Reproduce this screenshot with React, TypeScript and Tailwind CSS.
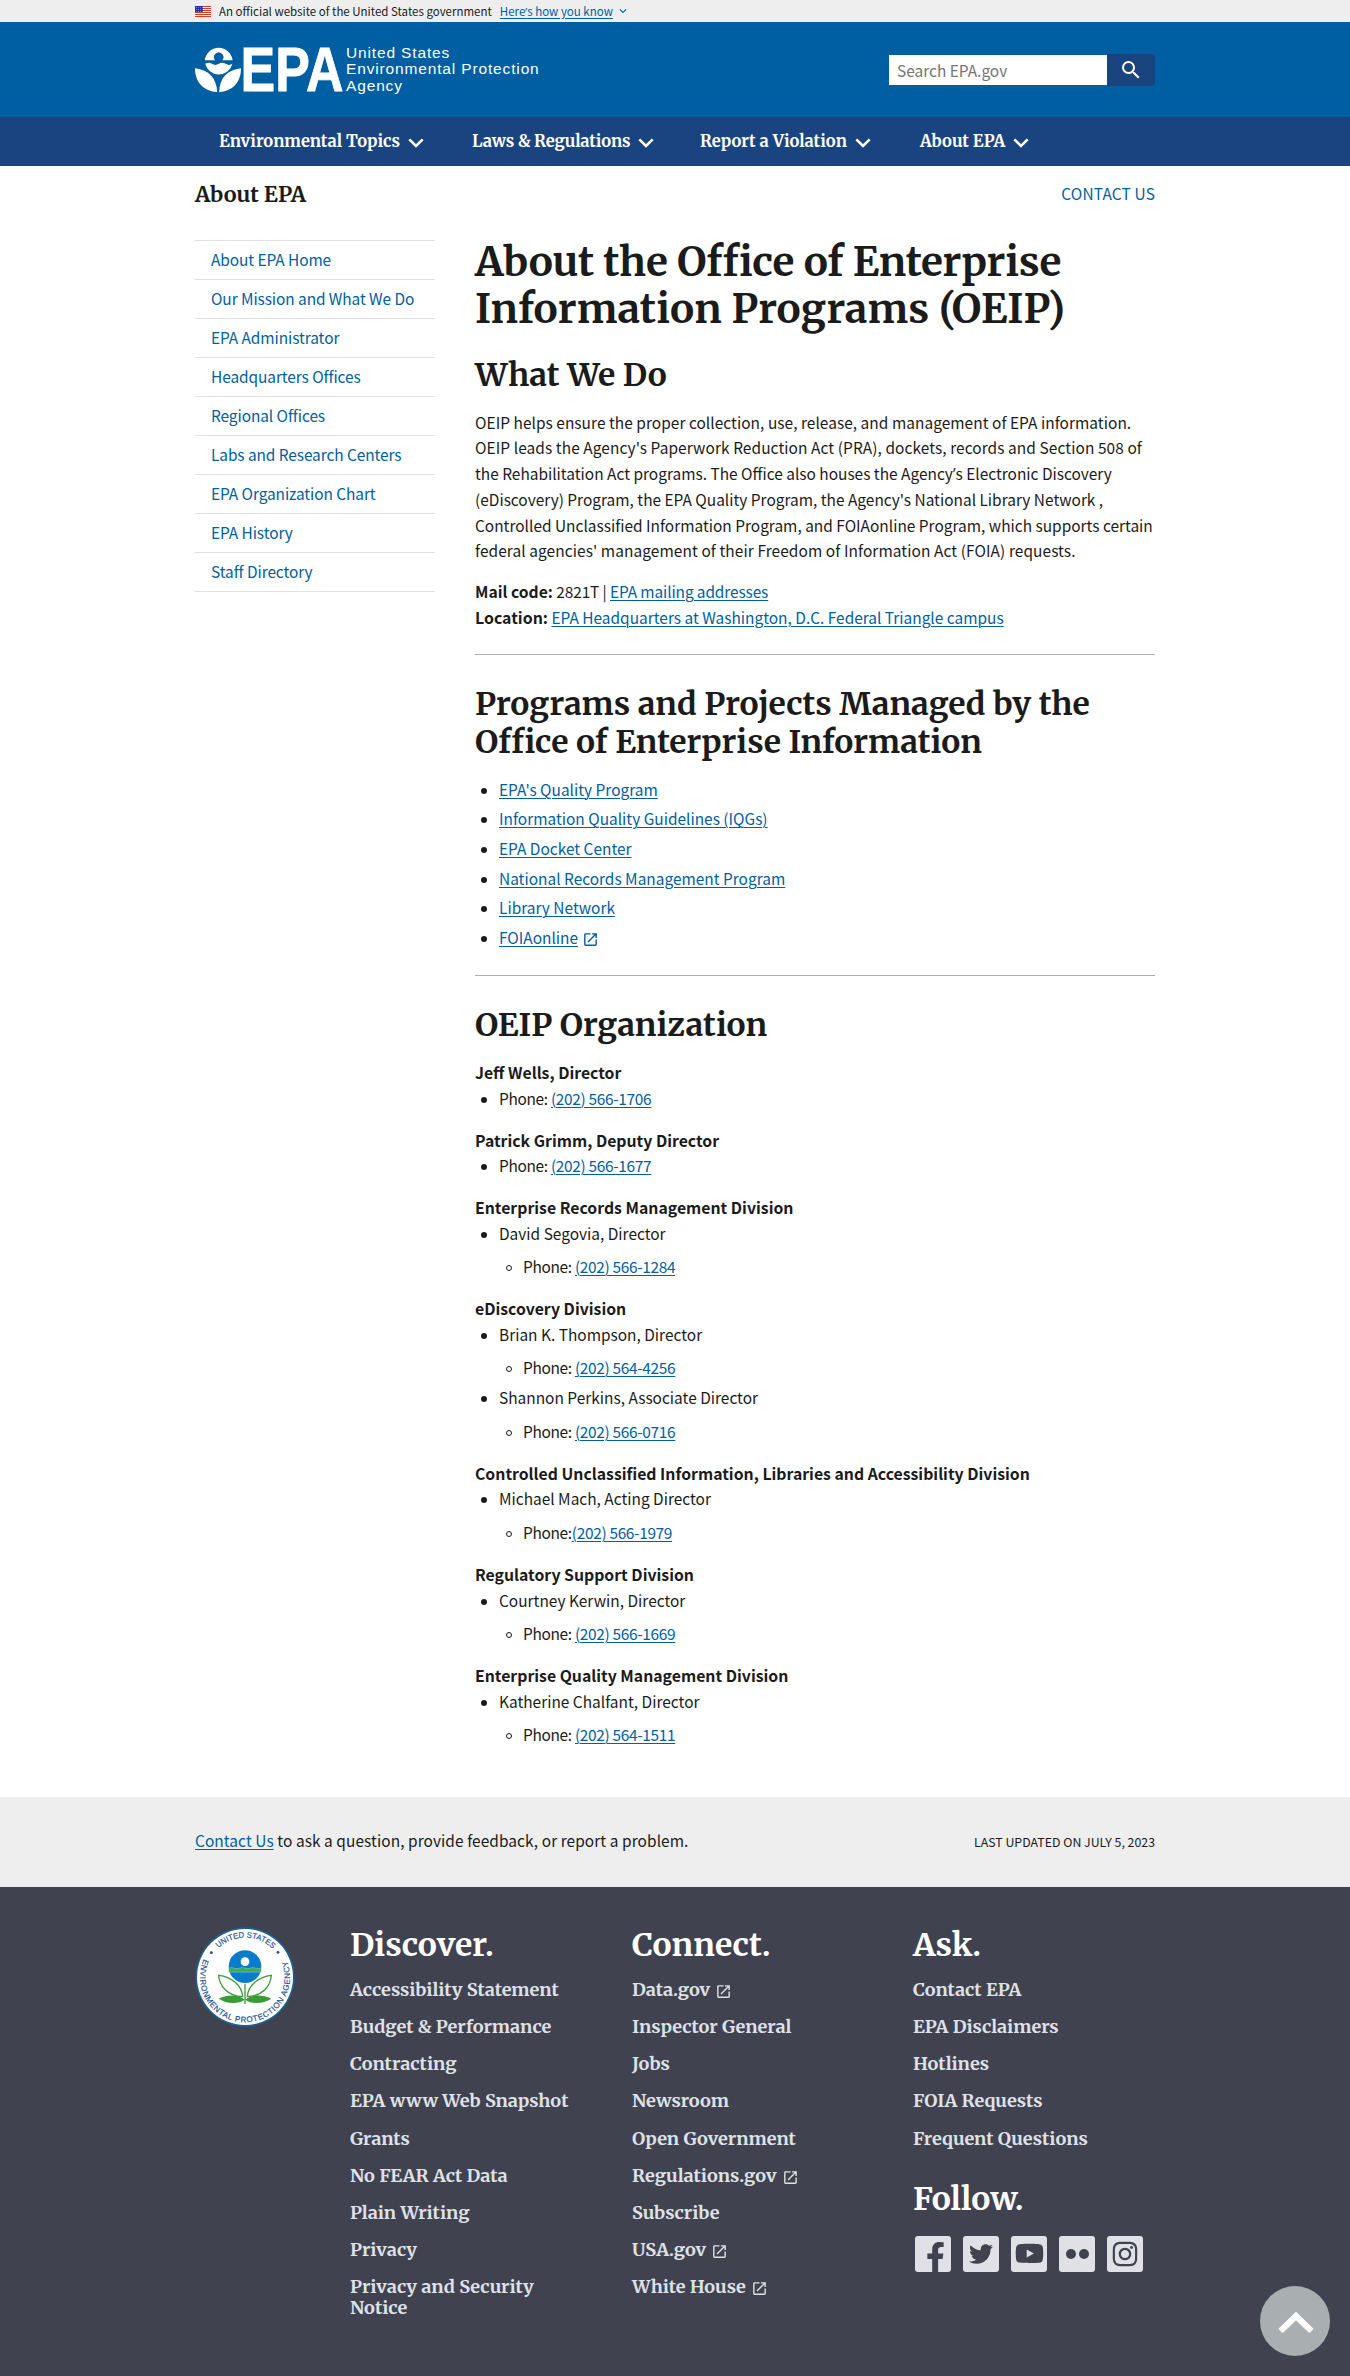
import React from 'react';
import { MdExpandMore, MdLaunch, MdSearch } from 'react-icons/md';
import { FaFacebookF, FaInstagram, FaTwitter, FaYoutube } from 'react-icons/fa';

const serif = "font-['Merriweather','DejaVu_Serif_Condensed',serif] font-bold";
const link = 'text-[#005ea2] underline underline-offset-[2px] decoration-1';

function Apostrophe() {
  return <span className="font-['Open_Sans',sans-serif]">’</span>;
}

function Flag() {
  return (
    <svg viewBox="0 0 16 11" className="h-[11px] w-4">
      <rect width="16" height="11" fill="#fff" />
      {[0, 2, 4, 6, 8, 10].map((y) => (
        <rect key={y} y={y} width="16" height="1" fill="#db3e1f" />
      ))}
      <rect width="8" height="6" fill="#1e33b1" />
      {[1, 3, 5].map((y) =>
        [1, 3, 5, 7].map((x) => <rect key={`${x}-${y}`} x={x} y={y} width=".6" height=".6" fill="#fff" />),
      )}
    </svg>
  );
}

function Logo() {
  return (
    <div className="flex h-[52px] text-white">
      <svg viewBox="0 0 150 52" className="h-[52px] w-[150px]" fill="#fff">
        <path d="M9.800 15.200A14 14 0 0 1 37.600 15.200H27.300A4.700 4.700 0 1 0 20.100 15.200Z" />
        <path d="M10.200 18.800q3.400-2.200 6.800 0t6.800 0t6.800 0t6.800 0A14 14 0 0 1 10.200 18.800Z" />
        <path d="M0 23.300C14 25 21.500 33 22.200 47.200C9 46 0 38 0 23.300Z" />
        <path d="M46 23.300C32 25 24.500 33 24.200 47.200C37 46 46 38 46 23.300Z" />
        <text
          x="45.500"
          y="45.800"
          fontFamily="Liberation Sans"
          fontWeight="700"
          fontSize="62.500"
          textLength="103"
          lengthAdjust="spacingAndGlyphs"
          stroke="#fff"
          strokeWidth=".8"
        >
          EPA
        </text>
      </svg>
      <div className="ml-px font-['Liberation_Sans',sans-serif] text-[15.500px] leading-[16.400px] tracking-[0.85px]">
        United States
        <br />
        Environmental Protection
        <br />
        Agency
      </div>
    </div>
  );
}

function Seal() {
  return (
    <svg viewBox="0 0 306 306" className="h-[102px] w-[102px]">
      <defs>
        <path id="seal-top" d="M35 153A118 118 0 0 1 271 153" />
        <path id="seal-bottom" d="M33 92A135 135 0 1 0 273 92" />
      </defs>
      <circle cx="153" cy="153" r="149" fill="#1f5f8f" />
      <circle cx="153" cy="153" r="144" fill="#fff" />
      <g fill="#1b4f91" stroke="#1b4f91" strokeWidth=".5" fontFamily="Liberation Sans" fontSize="24">
        <text>
          <textPath href="#seal-top" startOffset="97" textLength="180" lengthAdjust="spacingAndGlyphs">UNITED STATES</textPath>
        </text>
        <text>
          <textPath href="#seal-bottom" startOffset="8" textLength="530">ENVIRONMENTAL PROTECTION AGENCY</textPath>
        </text>
        <circle cx="52" cy="80" r="4" />
        <circle cx="252" cy="79" r="4" />
      </g>
      <circle cx="153" cy="122" r="49" fill="#0a7cc9" />
      <path d="M104.500 127h97v11h-97z" fill="#3fae49" />
      <path d="M105 126.500q8-4 16 0t16 0t16 0t16 0t16 0t16 0M106 138.500h95" stroke="#8fd0ee" strokeWidth="1.500" fill="none" />
      <circle cx="153" cy="107" r="13" fill="#fff" />
      <g fill="none" stroke="#3a9c35" strokeWidth="4">
        <path d="M153 173V234" />
        <path d="M146 212C144 178 112 152 74 148C76 180 100 210 146 212Z" />
        <path d="M160 212C162 178 194 152 232 148C230 180 206 210 160 212Z" />
      </g>
      <path d="M152 221C132 203 98 207 74 218C96 233 132 236 152 221ZM154 221C174 203 208 207 232 218C210 233 174 236 154 221Z" fill="#3a9c35" />
    </svg>
  );
}

const sideNav = [
  'About EPA Home',
  'Our Mission and What We Do',
  'EPA Administrator',
  'Headquarters Offices',
  'Regional Offices',
  'Labs and Research Centers',
  'EPA Organization Chart',
  'EPA History',
  'Staff Directory',
];

const programs = [
  "EPA's Quality Program",
  'Information Quality Guidelines (IQGs)',
  'EPA Docket Center',
  'National Records Management Program',
  'Library Network',
  'FOIAonline',
];

type Person = { name: string; phone: string; tight?: boolean };
const divisions: { title: string; phone?: string; people?: Person[] }[] = [
  { title: 'Jeff Wells, Director', phone: '(202) 566-1706' },
  { title: 'Patrick Grimm, Deputy Director', phone: '(202) 566-1677' },
  { title: 'Enterprise Records Management Division', people: [{ name: 'David Segovia, Director', phone: '(202) 566-1284' }] },
  {
    title: 'eDiscovery Division',
    people: [
      { name: 'Brian K. Thompson, Director', phone: '(202) 564-4256' },
      { name: 'Shannon Perkins, Associate Director', phone: '(202) 566-0716' },
    ],
  },
  {
    title: 'Controlled Unclassified Information, Libraries and Accessibility Division',
    people: [{ name: 'Michael Mach, Acting Director', phone: '(202) 566-1979', tight: true }],
  },
  { title: 'Regulatory Support Division', people: [{ name: 'Courtney Kerwin, Director', phone: '(202) 566-1669' }] },
  { title: 'Enterprise Quality Management Division', people: [{ name: 'Katherine Chalfant, Director', phone: '(202) 564-1511' }] },
];

const discover = [
  'Accessibility Statement',
  'Budget & Performance',
  'Contracting',
  'EPA www Web Snapshot',
  'Grants',
  'No FEAR Act Data',
  'Plain Writing',
  'Privacy',
  'Privacy and Security Notice',
];
const connect = [
  'Data.gov',
  'Inspector General',
  'Jobs',
  'Newsroom',
  'Open Government',
  'Regulations.gov',
  'Subscribe',
  'USA.gov',
  'White House',
];
const ask = ['Contact EPA', 'EPA Disclaimers', 'Hotlines', 'FOIA Requests', 'Frequent Questions'];
const external = ['Data.gov', 'Regulations.gov', 'USA.gov', 'White House'];

function NavItem({ children }: { children: React.ReactNode }) {
  return (
    <a className="flex items-center gap-2">
      {children}
      <svg viewBox="0 0 16 10" className="mt-[2px] h-[10px] w-4" fill="none" stroke="currentColor" strokeWidth="2.600">
        <path d="M1.300 1.300L8 8L14.700 1.300" />
      </svg>
    </a>
  );
}

function Bullet({ hollow = false }: { hollow?: boolean }) {
  return (
    <span
      className={
        hollow
          ? 'mt-[11px] mr-[10px] ml-[6px] size-[6px] shrink-0 rounded-full border border-[#1b1b1b]'
          : 'mt-[11px] mr-[12px] ml-[6px] size-[6px] shrink-0 rounded-full bg-[#1b1b1b]'
      }
    />
  );
}

function Phone({ number, tight = false }: { number: string; tight?: boolean }) {
  return (
    <span className="tracking-[-0.33px]">
      Phone:{tight ? '' : ' '}
      <a className={link}>{number}</a>
    </span>
  );
}

function FooterColumn({ title, items }: { title: string; items: string[] }) {
  return (
    <div>
      <h2 className={`${serif} text-[31.900px] leading-[38px] text-white`}>{title}</h2>
      <ul className={`${serif} mt-[15px] flex flex-col gap-4 text-[18.100px] leading-[21.150px] text-[#dfe1e8]`}>
        {items.map((item) => (
          <li key={item}>
            {item}
            {external.includes(item) && <MdLaunch className="ml-[5px] inline size-[17px] align-[-4px]" />}
          </li>
        ))}
      </ul>
    </div>
  );
}

function Social({ children }: { children: React.ReactNode }) {
  return (
    <span className="flex size-9 items-center justify-center overflow-hidden rounded-[3px] bg-[#dfe1e6] text-[#40434f]">
      {children}
    </span>
  );
}

const heading = `${serif} text-[31.850px] leading-[38px]`;

export default function App() {
  return (
    <div className="h-[2376px] w-[1350px] overflow-hidden bg-white font-['Noto_Sans_CJK_SC',sans-serif] text-[15.450px] leading-[25.440px] text-[#1b1b1b]">
      <div className="h-[22px] bg-[#eeeeee]">
        <div className="mx-auto flex h-full w-[960px] items-center text-[11.500px] leading-[22px]">
          <Flag />
          <span className="ml-2">An official website of the United States government</span>
          <a className={`${link} ml-2`}>
            Here
            <Apostrophe />s how you know
          </a>
          <MdExpandMore className="ml-[3px] size-[14px] text-[#005ea2]" />
        </div>
      </div>

      <header>
        <div className="h-[95px] bg-[#005ea2]">
          <div className="mx-auto flex w-[960px] justify-between">
            <div className="pt-[23px]">
              <Logo />
            </div>
            <div className="mt-8 flex h-[32px]">
              <div className="mt-px h-[30px] w-[218px] bg-white px-[8px] leading-[30px] text-[#757575]">Search EPA.gov</div>
              <button className="flex w-[48px] items-center justify-center rounded-r bg-[#1a4480] text-white">
                <MdSearch className="size-[24px]" />
              </button>
            </div>
          </div>
        </div>
        <nav className="h-[49px] bg-[#1a4480]">
          <div
            className={`${serif} mx-auto grid h-full w-[960px] grid-cols-[253px_228px_220px_auto] pt-px pl-6 text-[16.500px] text-white`}
          >
            <NavItem>Environmental Topics</NavItem>
            <NavItem>
              <span className="tracking-[-0.15px]">Laws &amp; Regulations</span>
            </NavItem>
            <NavItem>Report a Violation</NavItem>
            <NavItem>About EPA</NavItem>
          </div>
        </nav>
      </header>

      <div className="mx-auto flex h-[74px] w-[960px] items-start justify-between pt-4">
        <h2 className={`${serif} text-[21.500px] leading-[26px]`}>About EPA</h2>
        <a className="-mt-px tracking-[0.15px] text-[#005ea2]">CONTACT US</a>
      </div>

      <div className="mx-auto flex h-[1557px] w-[960px] gap-10">
        <ul className="w-[240px] self-start border-b border-[#dfe1e2] tracking-[-0.08px]">
          {sideNav.map((item) => (
            <li key={item} className="flex h-[39px] items-center border-t border-[#dfe1e2] pl-4 text-[#005ea2]">
              {item}
            </li>
          ))}
        </ul>

        <main className="w-[680px] shrink-0">
          <h1 className={`${serif} -mt-[2px] text-[40.450px] leading-[47px]`}>
            <span className="tracking-[-0.2px]">About the Office of Enterprise</span>
            <br />
            <span className="tracking-[0.1px]">Information Programs (OEIP)</span>
          </h1>
          <h2 className={`${heading} mt-[24px]`}>What We Do</h2>
          <p className="mt-[16px] whitespace-nowrap">
            <span className="tracking-[0.04px]">
              OEIP helps ensure the proper collection, use, release, and management of EPA information.
            </span>
            <br />
            <span className="tracking-[0.08px]">
              OEIP leads the Agency's Paperwork Reduction Act (PRA), dockets, records and Section 508 of
            </span>
            <br />
            the Rehabilitation Act programs. The Office also houses the Agency
            <Apostrophe />s Electronic Discovery
            <br />
            (eDiscovery) Program, the EPA Quality Program, the Agency's National Library Network ,
            <br />
            Controlled Unclassified Information Program, and FOIAonline Program, which supports certain
            <br />
            <span className="tracking-[0.08px]">
              federal agencies' management of their Freedom of Information Act (FOIA) requests.
            </span>
          </p>
          <p className="mt-[15.500px]">
            <strong className="text-[15.700px]">Mail code:</strong>{' '}
            <span className="tracking-[-0.12px]">
              2821T | <a className={link}>EPA mailing addresses</a>
            </span>
            <br />
            <strong className="text-[15.900px]">Location:</strong>{' '}
            <a className={link}>EPA Headquarters at Washington, D.C. Federal Triangle campus</a>
          </p>
          <hr className="mt-[24px] border-[#a9aeb1]" />
          <h2 className={`${heading} mt-[30px]`}>
            Programs and Projects Managed by the
            <br />
            Office of Enterprise Information
          </h2>
          <ul className="mt-[15.500px] flex flex-col gap-[4.300px]">
            {programs.map((item) => (
              <li key={item} className="flex">
                <Bullet />
                <a className={link}>{item}</a>
                {item === 'FOIAonline' && <MdLaunch className="mt-[6px] ml-[4px] size-[17px] text-[#005ea2]" />}
              </li>
            ))}
          </ul>
          <hr className="mt-[24.500px] border-[#a9aeb1]" />
          <h2 className={`${heading} mt-[30px]`}>OEIP Organization</h2>
          <dl className="mt-[16px] flex flex-col gap-[16.700px]">
            {divisions.map((d) => (
              <div key={d.title}>
                <dt className="text-[15.800px] font-bold">{d.title}</dt>
                {d.phone && (
                  <dd className="flex">
                    <Bullet />
                    <Phone number={d.phone} />
                  </dd>
                )}
                {d.people && (
                  <dd className="flex flex-col gap-[4.300px]">
                    {d.people.map((p) => (
                      <div key={p.name}>
                        <div className="flex">
                          <Bullet />
                          {p.name}
                        </div>
                        <div className="mt-[8.200px] flex pl-[25px]">
                          <Bullet hollow />
                          <span className="ml-px">
                            <Phone number={p.phone} tight={p.tight} />
                          </span>
                        </div>
                      </div>
                    ))}
                  </dd>
                )}
              </div>
            ))}
          </dl>
        </main>
      </div>

      <div className="h-[90px] bg-[#eeeeee]">
        <div className="mx-auto flex h-full w-[960px] items-center justify-between pb-[2px]">
          <span className="tracking-[0.07px]">
            <a className={link}>Contact Us</a> to ask a question, provide feedback, or report a problem.
          </span>
          <span className="pt-[3px] text-[12.350px]">LAST UPDATED ON JULY 5, 2023</span>
        </div>
      </div>

      <footer className="relative h-[489px] bg-[#40434f]">
        <div className="mx-auto grid w-[960px] grid-cols-[155px_282px_281px_242px] pt-[39px]">
          <div className="-ml-px">
            <Seal />
          </div>
          <div className="w-[225px]">
            <FooterColumn title="Discover." items={discover} />
          </div>
          <FooterColumn title="Connect." items={connect} />
          <div>
            <FooterColumn title="Ask." items={ask} />
            <h2 className={`${serif} mt-[31px] text-[31.900px] leading-[38px] text-white`}>Follow.</h2>
            <div className="mt-[18px] ml-[2px] flex gap-3">
              <Social>
                <FaFacebookF className="mt-[7px] ml-1 h-[30px] w-[19px]" preserveAspectRatio="none" />
              </Social>
              <Social>
                <FaTwitter className="size-6" />
              </Social>
              <Social>
                <FaYoutube className="size-[29px]" />
              </Social>
              <Social>
                <span className="mr-[3px] size-[10px] rounded-full bg-[#40434f]" />
                <span className="size-[10px] rounded-full bg-[#40434f]" />
              </Social>
              <Social>
                <FaInstagram className="size-7" />
              </Social>
            </div>
          </div>
        </div>
        <button className="absolute right-[20px] bottom-[20px] flex size-[70px] items-center justify-center rounded-full bg-[#a9aeb1]">
          <svg viewBox="0 0 36 24" className="mt-[1px] ml-[2px] h-6 w-9" fill="none" stroke="#fff" strokeWidth="6">
            <path d="M2.500 21L18 6L33.500 21" />
          </svg>
        </button>
      </footer>
    </div>
  );
}
